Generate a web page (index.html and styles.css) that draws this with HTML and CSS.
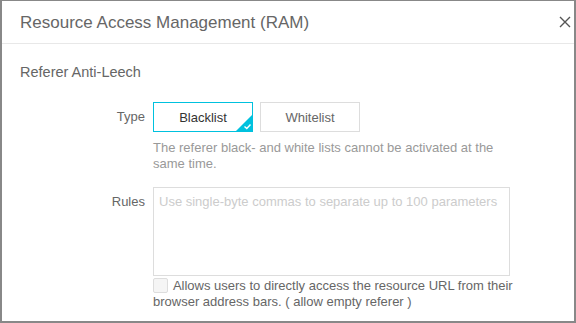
FILE: index.html
```html
<!DOCTYPE html>
<html>
<head>
<meta charset="utf-8">
<link rel="stylesheet" href="styles.css">
</head>
<body>
<div class="dialog">
  <div class="header">
    <div class="title">Resource Access Management (RAM)</div>
    <div class="close">
      <svg width="12" height="12" viewBox="0 0 12 12"><path d="M1 1L11 11M11 1L1 11" stroke="#555" stroke-width="1.4" fill="none"/></svg>
    </div>
  </div>
  <div class="body">
    <div class="section">Referer Anti-Leech</div>
    <div class="row">
      <div class="label type-label">Type</div>
      <div class="field">
        <div class="btns">
          <div class="btn active">Blacklist
            <span class="tick">
              <svg width="18" height="18" viewBox="0 0 18 18"><path d="M18 0V18H0Z" fill="#00c1de"/><path d="M9.5 12.5L11.8 14.6L15.5 10.6" stroke="#fff" stroke-width="1.4" fill="none"/></svg>
            </span>
          </div>
          <div class="btn">Whitelist</div>
        </div>
        <div class="help">The referer black- and white lists cannot be activated at the same time.</div>
      </div>
    </div>
    <div class="row rules-row">
      <div class="label rules-label">Rules</div>
      <div class="field">
        <div class="textarea">Use single-byte commas to separate up to 100 parameters</div>
        <div class="check"><span class="box"></span> Allows users to directly access the resource URL from their browser address bars. ( allow empty referer )</div>
      </div>
    </div>
  </div>
</div>
</body>
</html>
```
FILE: styles.css
```css
html, body { margin: 0; padding: 0; }
body { width: 576px; height: 323px; overflow: hidden; background: #fff; font-family: "Liberation Sans", Arial, sans-serif; }
.dialog { box-sizing: border-box; width: 576px; height: 323px; border: 2px solid #888; border-top-width: 1px; background: #fff; overflow: hidden; }
.header { display: flex; align-items: center; justify-content: space-between; height: 42px; border-bottom: 1px solid #e8e8e8; padding: 0 2px 0 18px; }
.title { font-size: 17px; color: #666; padding-top: 2px; }
.close { width: 14px; height: 14px; display: flex; align-items: center; justify-content: center; margin-top: 0; }
.body { padding: 0 0 0 18px; }
.section { font-size: 14.5px; color: #666; margin-top: 20px; height: 20px; }
.row { display: flex; margin-top: 18px; }
.label { width: 125px; text-align: right; font-size: 13px; color: #666; padding-right: 8px; }
.type-label { line-height: 30px; }
.field { display: flex; flex-direction: column; }
.btns { display: flex; gap: 7px; }
.btn { position: relative; box-sizing: border-box; width: 100px; height: 30px; border: 1px solid #ddd; font-size: 13px; color: #666; display: flex; align-items: center; justify-content: center; }
.btn.active { border-color: #00c1de; color: #333; }
.tick { position: absolute; right: -1px; bottom: -1px; width: 18px; height: 18px; display: block; line-height: 0; }
.help { font-size: 13px; color: #999; width: 350px; line-height: 16px; margin-top: 8px; }
.rules-row { margin-top: 15px; }
.rules-label { padding-top: 7px; }
.textarea { box-sizing: border-box; width: 357px; height: 89px; border: 1px solid #ddd; font-size: 13px; color: #ccc; padding: 6px 5px; }
.check { font-size: 13px; color: #666; width: 362px; line-height: 16px; margin-top: 2px; }
.box { display: inline-block; box-sizing: border-box; width: 15px; height: 15px; border: 1px solid #ddd; background: #f5f5f5; vertical-align: -3px; margin-right: 2px; border-radius: 2px; }
```
